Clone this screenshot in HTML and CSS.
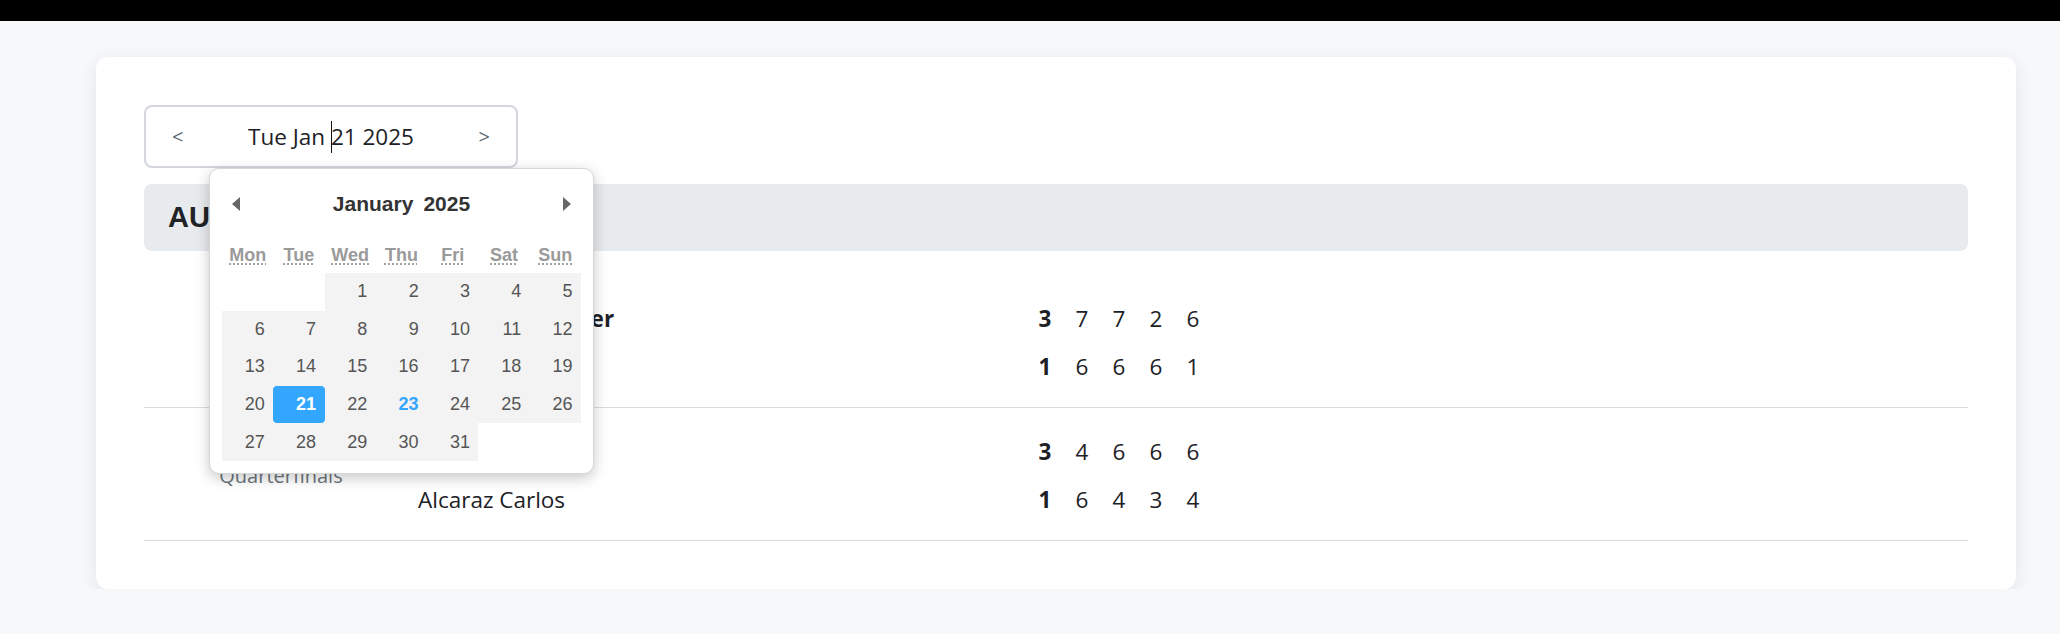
FILE: index.html
```html
<!DOCTYPE html>
<html lang="en">
<head>
<meta charset="utf-8">
<title>Results</title>
<link rel="stylesheet" href="styles.css">
</head>
<body>
<div class="topbar"></div>
<main class="page">
  <section class="card">
    <div class="datepicker">
      <div class="date-input">
        <span class="nav-arrow">&lt;</span>
        <span class="date-text">Tue Jan <span class="caret"></span>21 2025</span>
        <span class="nav-arrow">&gt;</span>
      </div>
      <div class="calendar">
        <div class="cal-nav">
          <span class="tri tri-left"></span>
          <div class="cal-title"><span>January</span><span>2025</span></div>
          <span class="tri tri-right"></span>
        </div>
        <div class="cal-weekdays">
          <abbr title="Monday">Mon</abbr>
          <abbr title="Tuesday">Tue</abbr>
          <abbr title="Wednesday">Wed</abbr>
          <abbr title="Thursday">Thu</abbr>
          <abbr title="Friday">Fri</abbr>
          <abbr title="Saturday">Sat</abbr>
          <abbr title="Sunday">Sun</abbr>
        </div>
        <div class="cal-days">
          <span class="day empty"></span><span class="day empty"></span>
          <span class="day">1</span><span class="day">2</span><span class="day">3</span><span class="day">4</span><span class="day">5</span>
          <span class="day">6</span><span class="day">7</span><span class="day">8</span><span class="day">9</span><span class="day">10</span><span class="day">11</span><span class="day">12</span>
          <span class="day">13</span><span class="day">14</span><span class="day">15</span><span class="day">16</span><span class="day">17</span><span class="day">18</span><span class="day">19</span>
          <span class="day">20</span><span class="day selected">21</span><span class="day">22</span><span class="day today">23</span><span class="day">24</span><span class="day">25</span><span class="day">26</span>
          <span class="day">27</span><span class="day">28</span><span class="day">29</span><span class="day">30</span><span class="day">31</span><span class="day empty"></span><span class="day empty"></span>
        </div>
      </div>
    </div>

    <h2 class="tournament">AUSTRALIAN OPEN</h2>

    <div class="matches">
      <div class="match">
        <div class="round">Quarterfinals</div>
        <div class="player winner">Zverev Alexander</div>
        <div class="score sets">3</div><div class="score">7</div><div class="score">7</div><div class="score">2</div><div class="score">6</div>
        <div class="player">Paul Tommy</div>
        <div class="score sets">1</div><div class="score">6</div><div class="score">6</div><div class="score">6</div><div class="score">1</div>
      </div>
      <div class="match">
        <div class="round">Quarterfinals</div>
        <div class="player winner">Djokovic Novak</div>
        <div class="score sets">3</div><div class="score">4</div><div class="score">6</div><div class="score">6</div><div class="score">6</div>
        <div class="player">Alcaraz Carlos</div>
        <div class="score sets">1</div><div class="score">6</div><div class="score">4</div><div class="score">3</div><div class="score">4</div>
      </div>
    </div>
  </section>
</main>
</body>
</html>
```

FILE: styles.css
```css
* { box-sizing: border-box; }

body {
  margin: 0;
  background: #f7f8fa;
  font-family: "Open Sans", "Noto Sans", sans-serif;
  color: #212529;
}

.topbar {
  height: 21px;
  background: #000;
}

.page {
  padding: 36px 44px 0 96px;
}

.card {
  background: #fff;
  border-radius: 12px;
  box-shadow: 0 4px 18px rgba(30, 40, 60, 0.09);
  padding: 48px;
}

/* date input */
.datepicker {
  position: relative;
  width: 374px;
  height: 63px;
}

.date-input {
  height: 100%;
  border: 2px solid #d3d7dd;
  border-radius: 8px;
  display: flex;
  align-items: center;
  justify-content: space-between;
  padding: 0 26px;
  font-size: 22.5px;
}

.nav-arrow {
  color: #5f6670;
  font-size: 20px;
}

.date-text {
  color: #1d2125;
  display: inline-flex;
  align-items: center;
  white-space: pre;
}

.caret {
  display: inline-block;
  width: 1px;
  height: 32px;
  background: #111;
  margin-right: -1px;
}

/* calendar popup */
.calendar {
  position: absolute;
  left: 65px;
  top: 100%;
  width: 385px;
  background: #fff;
  border: 1px solid #d6d6d6;
  border-radius: 10px;
  box-shadow: 0 4px 14px rgba(0, 0, 0, 0.22);
  padding: 0 12px 12px;
  font-family: "Liberation Sans", Arial, sans-serif;
  z-index: 10;
}

.cal-nav {
  height: 70px;
  display: flex;
  align-items: center;
  justify-content: space-between;
  padding: 0 10px;
}

.tri {
  width: 0;
  height: 0;
  border-top: 7.5px solid transparent;
  border-bottom: 7.5px solid transparent;
}
.tri-left { border-right: 8px solid #666; }
.tri-right { border-left: 8px solid #666; }

.cal-title {
  display: flex;
  gap: 10px;
  font-size: 21px;
  font-weight: bold;
  color: #333;
}

.cal-weekdays {
  height: 34px;
  display: grid;
  grid-template-columns: repeat(7, 1fr);
  align-items: start;
  padding-top: 6px;
}

.cal-weekdays abbr {
  text-align: center;
  font-size: 18px;
  font-weight: bold;
  color: #9a9a9a;
  text-decoration: underline dotted #9a9a9a;
  text-underline-offset: 3px;
}

.cal-days {
  display: grid;
  grid-template-columns: repeat(7, 1fr);
  grid-auto-rows: 37.6px;
}

.day {
  background: #f3f3f3;
  color: #555;
  font-size: 18px;
  display: flex;
  align-items: center;
  justify-content: flex-end;
  padding-right: 8.5px;
}

.day.empty { background: transparent; }

.day.selected {
  background: #33a6ff;
  color: #fff;
  font-weight: bold;
  border-radius: 4px;
}

.day.today {
  color: #33a6ff;
  font-weight: bold;
}

/* tournament header */
.tournament {
  margin: 16px 0 0;
  height: 67px;
  line-height: 67px;
  padding-left: 24px;
  background: #e8ebee;
  border-radius: 8px;
  font-family: "Liberation Sans", Arial, sans-serif;
  font-size: 29px;
  font-weight: bold;
  color: #1f2326;
}

/* matches */
.matches {
  margin-top: 24px;
}

.match {
  display: grid;
  grid-template-columns: 274px 608.5px repeat(5, 37px);
  grid-template-rows: 48px 48px;
  padding: 20px 0 16px;
  border-bottom: 1px solid #dcdcdc;
  font-size: 22.5px;
  line-height: 48px;
}

.round {
  grid-row: 1 / 3;
  align-self: center;
  text-align: center;
  font-size: 20px;
  color: #6c757d;
}

.player { color: #1d2125; }
.player.winner { font-weight: bold; }

.score {
  text-align: center;
  color: #1d2125;
}
.score.sets { font-weight: bold; }
```
